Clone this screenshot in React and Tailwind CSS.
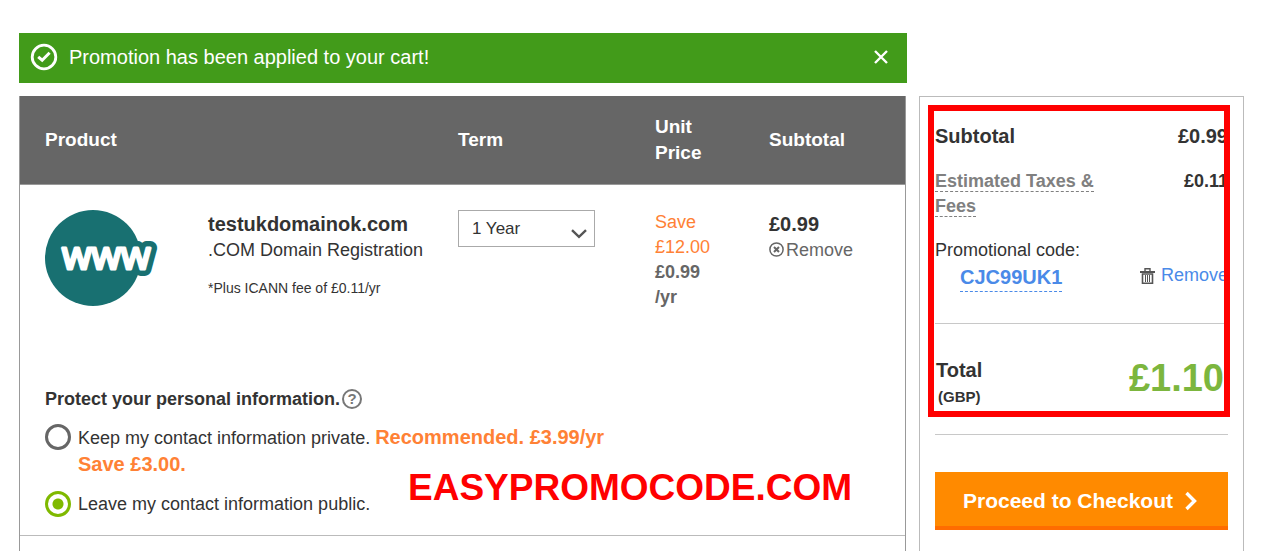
import { useState } from "react";

function CheckCircle() {
  return (
    <svg width="28" height="28" viewBox="0 0 28 28" fill="none" stroke="white" aria-hidden="true">
      <circle cx="14" cy="14" r="11.8" strokeWidth="2.8" />
      <path d="M8.2 13.8l4 3.4 7.4-7.4" strokeWidth="3" />
    </svg>
  );
}

function DomainLogo() {
  return (
    <svg width="114" height="96" viewBox="0 0 114 96" className="block" role="img" aria-label="www">
      <circle cx="48" cy="48" r="48" fill="#187071" />
      <g fontFamily="Open Sans, sans-serif" fontSize="38" fontWeight="400" strokeLinejoin="round">
        <text x="17" y="59" fill="#187071" stroke="#187071" strokeWidth="14">www</text>
        <text x="17" y="59" fill="white" stroke="white" strokeWidth="3">www</text>
      </g>
    </svg>
  );
}

function TrashIcon() {
  return (
    <svg width="15" height="16" viewBox="0 0 15 16" fill="none" stroke="#555" aria-hidden="true">
      <path d="M0 4h15" strokeWidth="2" />
      <path d="M5 3V.8h5V3" strokeWidth="1.4" />
      <path d="M2.5 6v9.2h10V6z" strokeWidth="1.6" />
      <path d="M5.5 7v7M7.5 7v7M9.5 7v7" strokeWidth="1" />
    </svg>
  );
}

function Banner({ onClose }) {
  return (
    <div role="status" className="flex h-[50px] items-center bg-[#429b1a] pl-[11px] pr-[18px] pb-[2px] text-white">
      <CheckCircle />
      <p className="ml-[11px] flex-1 text-[20px]">Promotion has been applied to your cart!</p>
      <button type="button" aria-label="Close" onClick={onClose}>
        <svg width="16" height="16" viewBox="0 0 16 16" stroke="white" strokeWidth="2.4">
          <path d="M2 2l12 12M14 2L2 14" />
        </svg>
      </button>
    </div>
  );
}

function CartTable() {
  return (
    <table className="w-full table-fixed border-collapse text-left">
      <colgroup>
        <col />
        <col className="w-[197px]" />
        <col className="w-[114px]" />
        <col className="w-[136px]" />
      </colgroup>
      <thead>
        <tr className="h-[88px] border-b border-[#999] bg-[#666] text-[19px] leading-[26px] text-white">
          <th scope="col" className="pl-[25px]">Product</th>
          <th scope="col">Term</th>
          <th scope="col" className="pr-[50px]">Unit Price</th>
          <th scope="col">Subtotal</th>
        </tr>
      </thead>
      <tbody>
        <tr className="align-top">
          <td className="pl-[25px] pt-[25px]">
            <div className="flex">
              <div className="w-[163px]">
                <DomainLogo />
              </div>
              <div>
                <h2 className="text-[20px] leading-[28px] font-bold">testukdomainok.com</h2>
                <p className="text-[18px] leading-[24px]">.COM Domain Registration</p>
                <p className="mt-4 text-[14px] leading-[20px]">*Plus ICANN fee of £0.11/yr</p>
              </div>
            </div>
          </td>
          <td className="pt-[25px]">
            <div className="relative w-[137px]">
              <select
                aria-label="Term"
                className="h-[37px] w-full appearance-none border border-[#aaa] bg-white pt-[2px] pl-[13px] text-[17px]"
              >
                <option>1 Year</option>
                <option>2 Years</option>
              </select>
              <svg
                className="pointer-events-none absolute right-2 bottom-2"
                width="16" height="10" viewBox="0 0 16 10" fill="none" stroke="#555" strokeWidth="2.4"
              >
                <path d="M1 1.2l7 6.6 7-6.6" />
              </svg>
            </div>
          </td>
          <td className="pt-[25px] pr-[50px] text-[18px] leading-[25px]">
            <p className="text-[#ff8135]">Save £12.00</p>
            <p className="font-bold text-[#666]">£0.99 /yr</p>
          </td>
          <td className="pt-[25px]">
            <p className="text-[20px] leading-[28px] font-bold">£0.99</p>
            <button type="button" className="flex items-center gap-[2px] text-[18px] leading-[24px] text-[#666]">
              <svg width="15" height="15" viewBox="0 0 15 15" fill="none" stroke="#666" aria-hidden="true">
                <circle cx="7.5" cy="7.5" r="6.6" strokeWidth="1.5" />
                <path d="M5 5l5 5M10 5l-5 5" strokeWidth="2" />
              </svg>
              Remove
            </button>
          </td>
        </tr>
      </tbody>
    </table>
  );
}

const radioClass =
  "size-[26px] shrink-0 appearance-none rounded-full border-3 border-[#666] bg-white checked:border-[#7fb900] checked:bg-[radial-gradient(circle,#7fb900_5px,white_6px)]";

function Privacy() {
  const [privacy, setPrivacy] = useState("public");

  return (
    <fieldset className="relative mt-[76px] border-b border-[#bbb] px-[25px] pb-[18px]">
      <legend className="flex items-center gap-[2px] text-[18px] leading-[26px] font-bold">
        Protect your personal information.
        <button
          type="button"
          aria-label="Help"
          className="flex size-[20px] items-center justify-center rounded-full border-2 border-[#777] text-[15px] leading-none text-[#777]"
        >
          ?
        </button>
      </legend>
      <div className="mt-3 flex gap-[7px]">
        <input
          type="radio" name="privacy" id="private" className={radioClass}
          checked={privacy === "private"} onChange={() => setPrivacy("private")}
        />
        <label htmlFor="private" className="text-[18px] leading-[26px]">
          Keep my contact information private.{" "}
          <span className="text-[20px] font-bold text-[#ff8135]">
            Recommended. £3.99/yr
            <br />
            Save £3.00.
          </span>
        </label>
      </div>
      <div className="mt-[13px] flex gap-[7px]">
        <input
          type="radio" name="privacy" id="public" className={radioClass}
          checked={privacy === "public"} onChange={() => setPrivacy("public")}
        />
        <label htmlFor="public" className="text-[18px] leading-[26px]">
          Leave my contact information public.
        </label>
      </div>
      <p className="absolute bottom-[25px] left-[388px] text-[37px] leading-[44px] font-bold text-[#f00]">
        EASYPROMOCODE.COM
      </p>
    </fieldset>
  );
}

function Summary() {
  return (
    <aside className="mt-[63px] w-[325px] shrink-0 border border-b-0 border-[#bbb] px-[15px] pt-[15px]">
      <div className="relative">
        <div className="flex justify-between text-[20px] leading-[48px] font-bold">
          <span>Subtotal</span>
          <span>£0.99</span>
        </div>
        <div className="mt-[9px] flex justify-between text-[18px] leading-[25px] font-bold">
          <a href="#taxes" className="w-[170px] text-[#808080]">
            <span className="border-b border-dashed border-[#808080]">Estimated Taxes &amp; Fees</span>
          </a>
          <span>£0.11</span>
        </div>
        <p className="mt-[19px] text-[18px] leading-[25px]">Promotional code:</p>
        <div className="flex items-start justify-between pl-[25px]">
          <a href="#code" className="border-b border-dashed border-[#4a8ae8] text-[20px] leading-[28px] font-bold text-[#4a8ae8]">
            CJC99UK1
          </a>
          <button type="button" className="flex items-center gap-[6px] text-[18px] leading-[25px] text-[#4a8ae8]">
            <TrashIcon />
            Remove
          </button>
        </div>
        <hr className="mt-[31px] border-[#c8c8c8]" />
        <div className="mt-[32px] flex justify-between pl-px font-bold">
          <div>
            <p className="text-[20px] leading-[28px]">Total</p>
            <p className="pl-[2px] text-[15px] leading-[25px]">(GBP)</p>
          </div>
          <p className="pr-1 text-[38px] leading-[44px] text-[#7cb63e]">£1.10</p>
        </div>
        <div className="pointer-events-none absolute -top-[7px] -right-[2px] -bottom-[8px] -left-[7px] border-6 border-[#f00]" />
      </div>
      <hr className="mt-[25px] border-[#c8c8c8]" />
      <button
        type="button"
        className="mt-[37px] flex h-[58px] w-full items-center justify-center gap-3 border-b-4 border-[#ff6c00] bg-[#ff8a00] pt-[3px] pr-[3px] text-[21px] font-bold text-white"
      >
        Proceed to Checkout
        <svg width="12" height="20" viewBox="0 0 12 20" fill="none" stroke="white" strokeWidth="3.4" aria-hidden="true">
          <path d="M1.5 2l8 8-8 8" />
        </svg>
      </button>
    </aside>
  );
}

function App() {
  const [showBanner, setShowBanner] = useState(true);

  return (
    <div className="flex min-h-screen gap-3 bg-white pt-[33px] pr-[27px] pl-[19px] font-['Liberation_Sans',Arial,sans-serif] text-[#333]">
      <main className="flex min-w-0 flex-1 flex-col">
        {showBanner && <Banner onClose={() => setShowBanner(false)} />}
        <section className="mt-[13px] mr-px flex-1 border-x border-[#999]">
          <CartTable />
          <Privacy />
        </section>
      </main>
      <Summary />
    </div>
  );
}

export default App;
